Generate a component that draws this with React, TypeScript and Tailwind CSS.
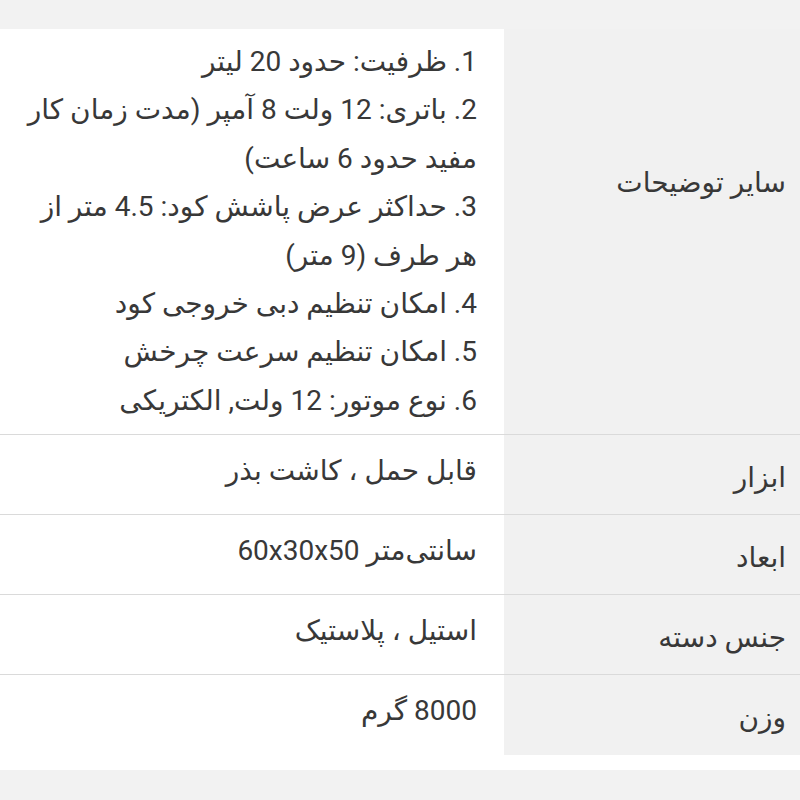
import React from "react";

const font = { fontFamily: 'Roboto, "DejaVu Sans", sans-serif' };

const listLines: string[] = [
  "1. ظرفیت: حدود 20 لیتر",
  "2. باتری: 12 ولت 8 آمپر (مدت زمان کار",
  "مفید حدود 6 ساعت)",
  "3. حداکثر عرض پاشش کود: 4.5 متر از",
  "هر طرف (9 متر)",
  "4. امکان تنظیم دبی خروجی کود",
  "5. امکان تنظیم سرعت چرخش",
  "6. نوع موتور: 12 ولت, الکتریکی",
];

const rows: { label: string; value: string }[] = [
  { label: "ابزار", value: "قابل حمل ، کاشت بذر" },
  { label: "ابعاد", value: "سانتی‌متر 60x30x50" },
  { label: "جنس دسته", value: "استیل ، پلاستیک" },
  { label: "وزن", value: "8000 گرم" },
];

export default function App() {
  return (
    <div
      dir="rtl"
      className="min-h-screen w-full bg-[#f2f2f2] pt-[29px] text-[#383838]"
      style={font}
    >
      <div className="bg-white pb-[15px]">
        <div className="flex border-b border-[#dadada]">
          <div className="w-[296px] shrink-0 bg-[#f1f1f1] pr-[14px] pt-[130px] text-[28px] leading-[48px]">
            سایر توضیحات
          </div>
          <div className="flex-1 pr-[27px] pt-[9px] pb-[9px] text-[28px] leading-[48.4px]">
            {listLines.map((l, i) => (
              <div key={i} className="whitespace-nowrap">
                {l}
              </div>
            ))}
          </div>
        </div>
        {rows.map((r, i) => (
          <div
            key={i}
            className={
              "flex h-[80px] " +
              (i < rows.length - 1 ? "border-b border-[#dadada]" : "")
            }
          >
            <div className="w-[296px] shrink-0 bg-[#f1f1f1] pr-[14px] pt-[19px] text-[28px] leading-[48px]">
              {r.label}
            </div>
            <div className="flex-1 pr-[27px] pt-[12px] text-[28px] leading-[48px] whitespace-nowrap">
              {r.value}
            </div>
          </div>
        ))}
      </div>
    </div>
  );
}
